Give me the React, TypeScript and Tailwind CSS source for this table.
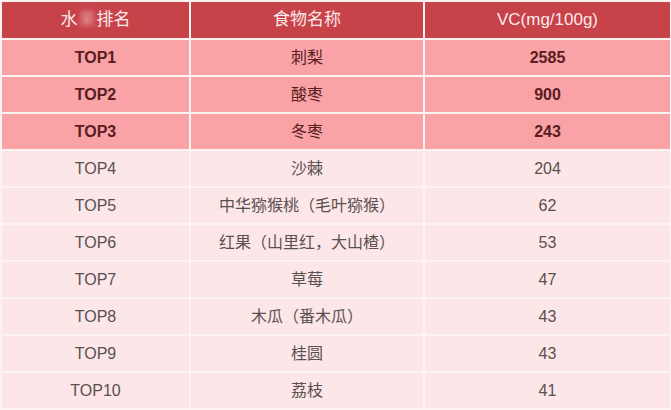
import React from 'react';

type Row = { rank: string; name: string; vc: string };

const rows: Row[] = [
  { rank: 'TOP1', name: '刺梨', vc: '2585' },
  { rank: 'TOP2', name: '酸枣', vc: '900' },
  { rank: 'TOP3', name: '冬枣', vc: '243' },
  { rank: 'TOP4', name: '沙棘', vc: '204' },
  { rank: 'TOP5', name: '中华猕猴桃（毛叶猕猴）', vc: '62' },
  { rank: 'TOP6', name: '红果（山里红，大山楂）', vc: '53' },
  { rank: 'TOP7', name: '草莓', vc: '47' },
  { rank: 'TOP8', name: '木瓜（番木瓜）', vc: '43' },
  { rank: 'TOP9', name: '桂圆', vc: '43' },
  { rank: 'TOP10', name: '荔枝', vc: '41' },
];

const font = { fontFamily: '"Liberation Sans", "Noto Sans CJK SC", sans-serif' };

export default function App() {
  return (
    <div className="h-[410px] w-[671px] overflow-hidden bg-[#fcf3f3] pl-[2px] pt-[2px]" style={font}>
      <div className="grid grid-cols-[187px_232px_245px] gap-[2px]">
        <div className="flex h-[36px] items-center justify-center bg-[#c8424a] text-[17px] text-[#fbe9e9]">
          水<span className="mx-[1px] text-[#e7a3a6] blur-[2px]">果</span>排名
        </div>
        <div className="flex h-[36px] items-center justify-center bg-[#c8424a] text-[17px] text-[#fbe9e9]">食物名称</div>
        <div className="flex h-[36px] items-center justify-center bg-[#c8424a] text-[17px] text-[#fbe9e9]">VC(mg/100g)</div>

        {rows.map((r, i) => {
          const top = i < 3;
          const cell = top
            ? 'flex h-[35px] items-center justify-center bg-[#f9a3a6] text-[16px] font-bold text-[#5a1c21]'
            : 'flex h-[35px] items-center justify-center bg-[#fde6e8] text-[16px] text-[#595050]';
          return (
            <React.Fragment key={r.rank}>
              <div className={cell}>{r.rank}</div>
              <div className={`${cell} font-normal`}>{r.name}</div>
              <div className={cell}>{r.vc}</div>
            </React.Fragment>
          );
        })}
      </div>
    </div>
  );
}
